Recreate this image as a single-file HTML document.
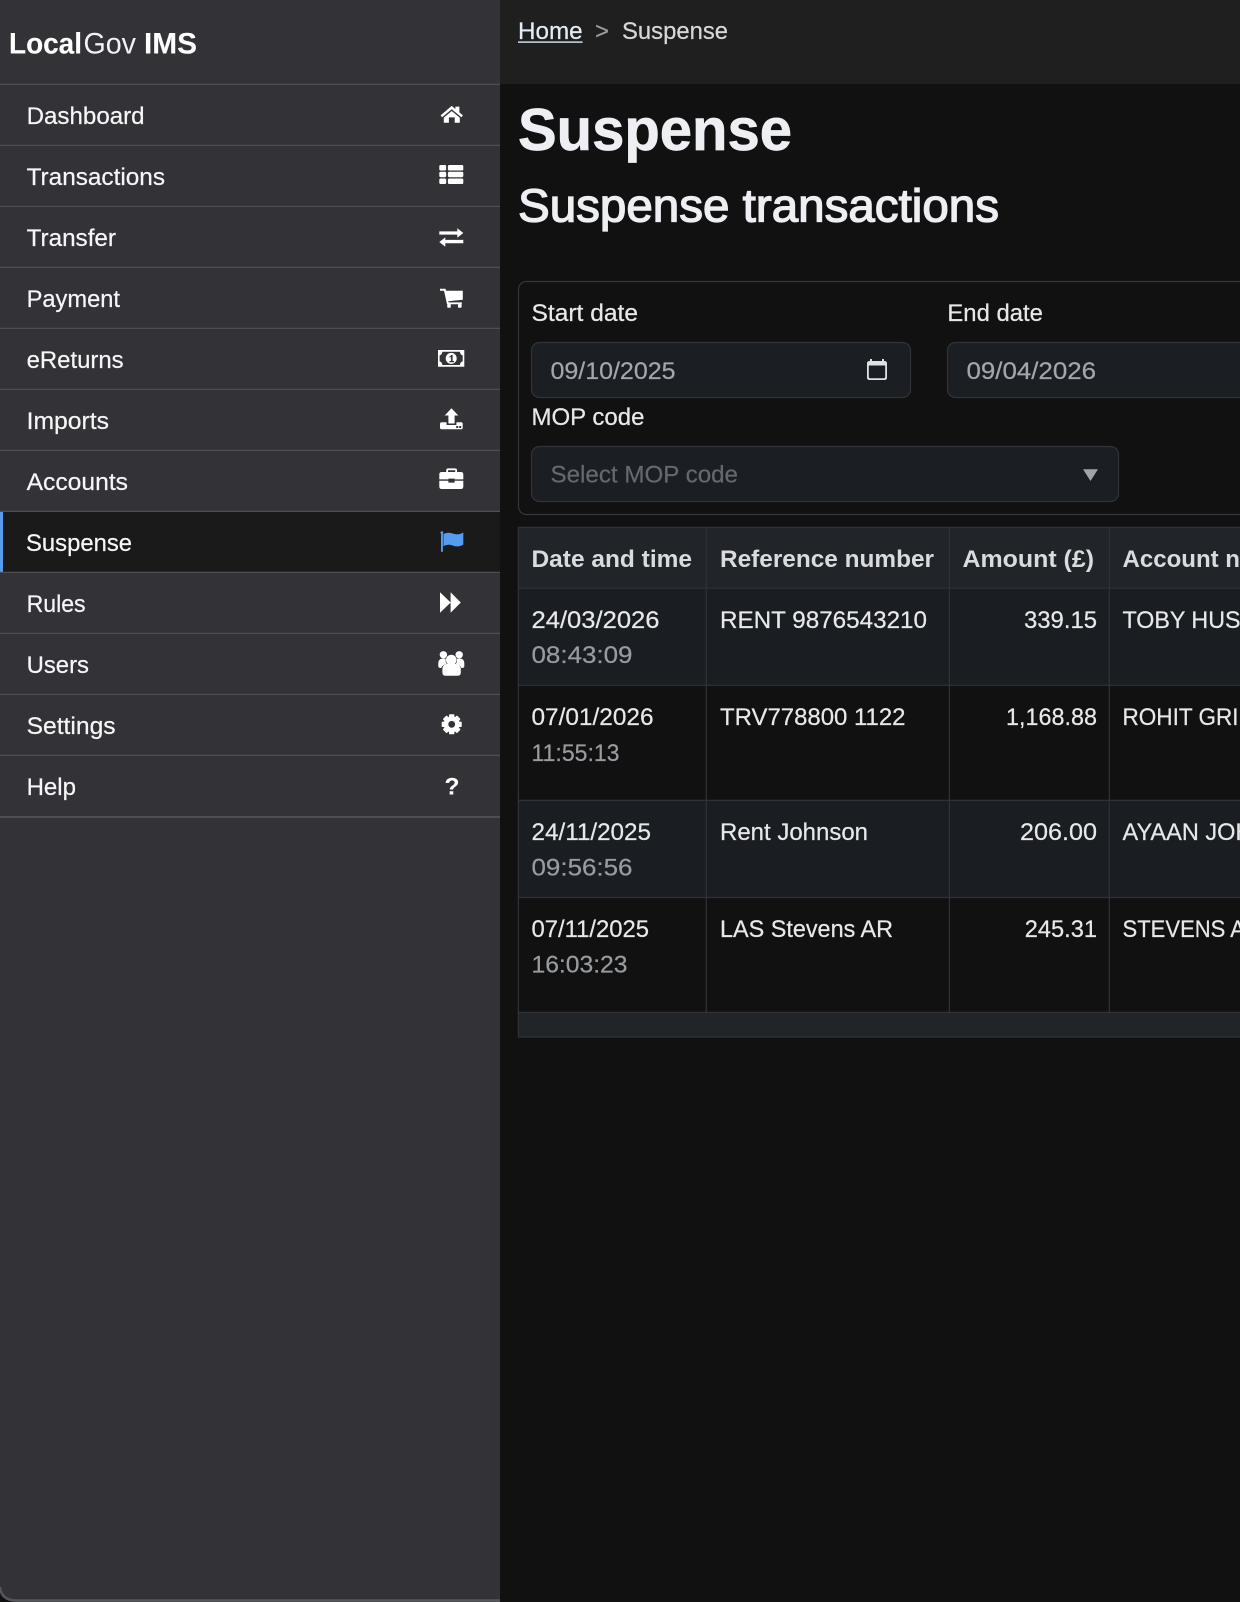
<!DOCTYPE html>
<html lang="en">
<head>
<meta charset="utf-8">
<title>Suspense - LocalGov IMS</title>
<style>
html,body{margin:0;padding:0;background:#111112;width:1240px;height:1602px;overflow:hidden}
svg{display:block}
text{font-family:"Liberation Sans",Arial,sans-serif;font-size:24.4px;color:#e7e8ea;fill:currentColor;stroke:currentColor;stroke-width:.22px}
.nav{color:#f6f6f8}
.b{font-weight:700;stroke-width:.1px}
.th{font-weight:700;color:#d9dbde;stroke-width:0}
.t{color:#989ba0}
.v{color:#a3a6aa}
.ln{stroke:#4c5053;stroke-width:1.2}
.tl{stroke:#2f3338;stroke-width:1.2}
.ic{fill:#fff}
</style>
</head>
<body>
<svg width="1240" height="1602" viewBox="0 0 1240 1602" xmlns="http://www.w3.org/2000/svg">
<rect width="1240" height="1602" fill="#111112"/>
<rect x="500" width="740" height="84" fill="#1f1f1f"/>

<!-- sidebar -->
<path d="M0 0H500V1602H16Q0 1602 0 1586Z" fill="#323237"/>
<path d="M0 1587Q1 1600 16 1600.5H500" fill="none" stroke="#55575a" stroke-width="2.4"/>
<rect y="512" width="500" height="60" fill="#1a1a1a"/>
<rect y="512" width="3" height="60" fill="#559bef"/>

<g class="ln">
<line x1="0" x2="500" y1="84.4" y2="84.4"/><line x1="0" x2="500" y1="145.4" y2="145.4"/>
<line x1="0" x2="500" y1="206.4" y2="206.4"/><line x1="0" x2="500" y1="267.4" y2="267.4"/>
<line x1="0" x2="500" y1="328.4" y2="328.4"/><line x1="0" x2="500" y1="389.4" y2="389.4"/>
<line x1="0" x2="500" y1="450.4" y2="450.4"/><line x1="0" x2="500" y1="511.4" y2="511.4"/>
<line x1="0" x2="500" y1="572.4" y2="572.4"/><line x1="0" x2="500" y1="633.4" y2="633.4"/>
<line x1="0" x2="500" y1="694.4" y2="694.4"/><line x1="0" x2="500" y1="755.4" y2="755.4"/>
<line x1="0" x2="500" y1="817" y2="817" stroke-width="2"/>
</g>

<text x="9" y="53.5" class="b" style="font-size:30px;color:#fff" textLength="73" lengthAdjust="spacingAndGlyphs">Local</text>
<text x="83.5" y="53.5" style="font-size:30px;color:#f2f2f4;stroke-width:0" textLength="52.5" lengthAdjust="spacingAndGlyphs">Gov</text>
<text x="144" y="53.5" class="b" style="font-size:30px;color:#fff" textLength="53" lengthAdjust="spacingAndGlyphs">IMS</text>

<text class="nav" x="26.6" y="124" textLength="118" lengthAdjust="spacingAndGlyphs">Dashboard</text>
<text class="nav" x="26.6" y="185" textLength="138.4" lengthAdjust="spacingAndGlyphs">Transactions</text>
<text class="nav" x="26.6" y="246" textLength="89.4" lengthAdjust="spacingAndGlyphs">Transfer</text>
<text class="nav" x="26.6" y="307" textLength="93.4" lengthAdjust="spacingAndGlyphs">Payment</text>
<text class="nav" x="26.6" y="368" textLength="97" lengthAdjust="spacingAndGlyphs">eReturns</text>
<text class="nav" x="26.6" y="429" textLength="82.4" lengthAdjust="spacingAndGlyphs">Imports</text>
<text class="nav" x="26.6" y="490" textLength="101.4" lengthAdjust="spacingAndGlyphs">Accounts</text>
<text class="nav" x="26" y="551" textLength="106" lengthAdjust="spacingAndGlyphs">Suspense</text>
<text class="nav" x="26.6" y="612" textLength="59" lengthAdjust="spacingAndGlyphs">Rules</text>
<text class="nav" x="26.6" y="673" textLength="62.4" lengthAdjust="spacingAndGlyphs">Users</text>
<text class="nav" x="26.6" y="734" textLength="89" lengthAdjust="spacingAndGlyphs">Settings</text>
<text class="nav" x="26.6" y="795" textLength="49.4" lengthAdjust="spacingAndGlyphs">Help</text>

<!-- icons -->
<g class="ic">
<!-- home -->
<path d="M440.6 115.4L451.7 105.9L455.4 109V106.6H459.4V112.4L462.9 115.4L461.4 117.2L451.7 109.2L442.1 117.2Z"/>
<path d="M443.8 117.6L451.7 111L459.8 117.6V122.8H454.7V117.4H448.9V122.8H443.8Z"/>
<!-- th-list -->
<rect x="439.3" y="165" width="6.9" height="5.5" rx="1.4"/><rect x="447.9" y="165" width="15.4" height="5.5" rx="1.4"/>
<rect x="439.3" y="171.8" width="6.9" height="5.4" rx="1.4"/><rect x="447.9" y="171.8" width="15.4" height="5.4" rx="1.4"/>
<rect x="439.3" y="178.5" width="6.9" height="5.5" rx="1.4"/><rect x="447.9" y="178.5" width="15.4" height="5.5" rx="1.4"/>
<!-- transfer -->
<path d="M439.3 231.4H457.3V228.3L463.3 233L457.3 237.7V234.6H439.3Z"/>
<path d="M463.3 239.9H445.3V237.4L439.3 242L445.3 246.7V243.3H463.3Z"/>
<!-- cart -->
<path d="M440 288.8H445.4L446.2 290.8H462.8V299.8L448.2 301.2L448.6 302.4H461.8V304.2H447L444 290.8H440Z"/>
<rect x="447.2" y="304" width="3.6" height="3.7" rx=".8"/><rect x="458" y="304" width="3.6" height="3.7" rx=".8"/>
<!-- money -->
<path fill-rule="evenodd" d="M438 350H464.3V366.7H438ZM442.4 351.8Q442 355 439.6 355.4V361.4Q442 361.8 442.4 365H459.9Q460.3 361.8 462.7 361.4V355.4Q460.3 355 459.9 351.8Z"/>
<circle cx="451.2" cy="358.4" r="5.5"/>
<path d="M449.3 356.8L451.6 354.9H452.6V361H454V362.3H449.4V361H450.9V356.8L449.7 357.8Z" fill="#323237"/>
<!-- upload -->
<path d="M451.5 408.3L458.3 415.5H454.6V423.5H448.4V415.5H444.7Z"/>
<path d="M441.6 422.2H446.6V425H456.4V422.2H461.2Q462.7 422.2 462.7 424V427.8Q462.7 429.3 461 429.3H441.7Q440 429.3 440 427.8V424Q440 422.2 441.6 422.2Z"/>
<rect x="456.2" y="426" width="2" height="2" fill="#323237"/><rect x="459.2" y="426" width="2" height="2" fill="#323237"/>
<!-- briefcase -->
<path fill-rule="evenodd" d="M448.2 468.4H455.2Q457 468.4 457 470.2V472H461Q463.3 472 463.3 474.4V479.4H454.6V478.6H448.4V479.4H439.3V474.4Q439.3 472 441.6 472H446.2V470.2Q446.2 468.4 448.2 468.4ZM448 470.2V472H455.2V470.2Z"/>
<path d="M439.3 480.8H448.4V482.6H454.6V480.8H463.3V486.6Q463.3 489 461 489H441.6Q439.3 489 439.3 486.6Z"/>
<!-- fast forward -->
<path d="M440 592.3L450.7 602.5L440 612.7Z"/>
<path d="M450.6 592.3L460.8 602.5L450.6 612.7Z"/>
<!-- users -->
<circle cx="451.3" cy="660" r="5.3"/>
<circle cx="443.4" cy="654.8" r="3.7"/><circle cx="459.2" cy="654.8" r="3.7"/>
<path d="M442.4 671V669C442.4 665.8 445 664 447.4 664H455.4C458 664 460.8 665.8 460.8 669V672.8Q460.8 675.7 457.8 675.7H445.4Q442.4 675.7 442.4 672.8Z"/>
<path d="M438.3 666.4V663C438.3 660 440.4 658.6 442 658.6H445.8Q445 662 447 664Q442.6 664.6 441.2 668Q438.3 668 438.3 666.4Z"/>
<path d="M464.3 666.4V663C464.3 660 462.2 658.6 460.6 658.6H456.8Q457.6 662 455.6 664Q460 664.6 461.4 668Q464.3 668 464.3 666.4Z"/>
<!-- gear -->
<g transform="translate(451.7 724.3)">
<circle r="8"/>
<rect x="-2.7" y="-10" width="5.4" height="20" rx=".8"/>
<rect x="-2.7" y="-10" width="5.4" height="20" rx=".8" transform="rotate(45)"/>
<rect x="-2.7" y="-10" width="5.4" height="20" rx=".8" transform="rotate(90)"/>
<rect x="-2.7" y="-10" width="5.4" height="20" rx=".8" transform="rotate(135)"/>
<circle r="3.4" fill="#323237"/>
</g>
</g>
<!-- flag -->
<g fill="#559bef">
<rect x="441" y="533" width="1.9" height="18.8"/><circle cx="441.9" cy="532.6" r="1.4"/>
<path d="M443.4 534.2C447 532 450 532.6 453 533.6C456.5 534.8 460 534.6 463.3 532.4V544.6C460 546.7 456.5 546.9 453 545.6C450 544.6 447 544.2 443.4 546.2Z"/>
</g>
<text x="452" y="794.4" text-anchor="middle" class="b" style="font-size:24.5px;color:#fff">?</text>

<!-- breadcrumb -->
<text x="518" y="39" style="color:#e3edf7" textLength="64.6" lengthAdjust="spacingAndGlyphs">Home</text>
<rect x="518" y="41.4" width="64.6" height="1.4" fill="#d6e8fa"/>
<text x="595" y="39" style="color:#9b9da0" textLength="14" lengthAdjust="spacingAndGlyphs">&gt;</text>
<text x="622" y="39" style="color:#d6d8da" textLength="106" lengthAdjust="spacingAndGlyphs">Suspense</text>

<!-- headings -->
<text x="518" y="150" class="b" style="font-size:59.5px;color:#eeeff3;stroke-width:.7px" textLength="274" lengthAdjust="spacingAndGlyphs">Suspense</text>
<text x="518" y="221.5" style="font-size:46.5px;color:#eeeff3;stroke-width:1.3px" textLength="481" lengthAdjust="spacingAndGlyphs">Suspense transactions</text>

<!-- filter card -->
<rect x="518.5" y="281.5" width="900" height="233" rx="8" fill="#111112" stroke="#33363b" stroke-width="1.2"/>
<text x="531.5" y="321" textLength="106.5" lengthAdjust="spacingAndGlyphs">Start date</text>
<text x="947.4" y="321" textLength="95.5" lengthAdjust="spacingAndGlyphs">End date</text>
<rect x="531.5" y="342.5" width="379" height="55" rx="8" fill="#1b1e22" stroke="#30343a" stroke-width="1.2"/>
<rect x="947.5" y="342.5" width="500" height="55" rx="8" fill="#1b1e22" stroke="#30343a" stroke-width="1.2"/>
<text class="v" x="550.5" y="379" textLength="125" lengthAdjust="spacingAndGlyphs">09/10/2025</text>
<text class="v" x="966.5" y="379" textLength="129.5" lengthAdjust="spacingAndGlyphs">09/04/2026</text>
<path fill-rule="evenodd" fill="#dfe1e4" d="M870 359H872V361H882V359H884V361H884.5Q887 361 887 363.5V377.5Q887 380 884.5 380H869.5Q867 380 867 377.5V363.5Q867 361 869.5 361H870ZM868.8 365.5V377Q868.8 378.2 870 378.2H884Q885.2 378.2 885.2 377V365.5Z"/>
<text x="531.5" y="425" textLength="113" lengthAdjust="spacingAndGlyphs">MOP code</text>
<rect x="531.5" y="446.5" width="587" height="55" rx="8" fill="#1b1e22" stroke="#30343a" stroke-width="1.2"/>
<text x="550.5" y="482.7" style="color:#65696e" textLength="187.5" lengthAdjust="spacingAndGlyphs">Select MOP code</text>
<path d="M1083 469.2H1098L1090.5 481Z" fill="#a0a4a9"/>

<!-- table -->
<rect x="518" y="527" width="760" height="61" fill="#212429"/>
<rect x="518" y="588" width="760" height="97" fill="#1a1d21"/>
<rect x="518" y="685" width="760" height="115.4" fill="#111112"/>
<rect x="518" y="800.4" width="760" height="97" fill="#1a1d21"/>
<rect x="518" y="897.4" width="760" height="115" fill="#111112"/>
<rect x="518" y="1012.4" width="760" height="25" fill="#212429"/>
<g class="tl">
<line x1="518" x2="1240" y1="527.4" y2="527.4"/>
<line x1="518" x2="1240" y1="588.2" y2="588.2"/>
<line x1="518" x2="1240" y1="685.3" y2="685.3"/>
<line x1="518" x2="1240" y1="800.4" y2="800.4"/>
<line x1="518" x2="1240" y1="897.5" y2="897.5"/>
<line x1="518" x2="1240" y1="1012.4" y2="1012.4"/>
<line x1="518" x2="1240" y1="1037" y2="1037"/>
<line x1="518.4" x2="518.4" y1="527" y2="1037.4"/>
<line x1="706.3" x2="706.3" y1="527" y2="1012.4"/>
<line x1="949.4" x2="949.4" y1="527" y2="1012.4"/>
<line x1="1109.3" x2="1109.3" y1="527" y2="1012.4"/>
</g>

<text class="th" x="531.5" y="567" textLength="160.5" lengthAdjust="spacingAndGlyphs">Date and time</text>
<text class="th" x="720" y="567" textLength="214" lengthAdjust="spacingAndGlyphs">Reference number</text>
<text class="th" x="962.5" y="567" textLength="131.5" lengthAdjust="spacingAndGlyphs">Amount (£)</text>
<text class="th" x="1122.5" y="567" textLength="117.5" lengthAdjust="spacingAndGlyphs">Account n</text>

<text x="531.5" y="628" textLength="128" lengthAdjust="spacingAndGlyphs">24/03/2026</text>
<text class="t" x="531.5" y="663" textLength="101" lengthAdjust="spacingAndGlyphs">08:43:09</text>
<text x="720" y="628" textLength="207" lengthAdjust="spacingAndGlyphs">RENT 9876543210</text>
<text x="1024" y="628" textLength="73" lengthAdjust="spacingAndGlyphs">339.15</text>
<text x="1122.5" y="628" textLength="118" lengthAdjust="spacingAndGlyphs">TOBY HUS</text>

<text x="531.5" y="725" textLength="122" lengthAdjust="spacingAndGlyphs">07/01/2026</text>
<text class="t" x="531.5" y="761" textLength="88" lengthAdjust="spacingAndGlyphs">11:55:13</text>
<text x="720" y="725" textLength="185.5" lengthAdjust="spacingAndGlyphs">TRV778800 1122</text>
<text x="1006" y="725" textLength="91" lengthAdjust="spacingAndGlyphs">1,168.88</text>
<text x="1122.5" y="725" textLength="116" lengthAdjust="spacingAndGlyphs">ROHIT GRI</text>

<text x="531.5" y="840" textLength="119.5" lengthAdjust="spacingAndGlyphs">24/11/2025</text>
<text class="t" x="531.5" y="875.7" textLength="101" lengthAdjust="spacingAndGlyphs">09:56:56</text>
<text x="720" y="840" textLength="148" lengthAdjust="spacingAndGlyphs">Rent Johnson</text>
<text x="1020" y="840" textLength="77" lengthAdjust="spacingAndGlyphs">206.00</text>
<text x="1122.5" y="840" textLength="130" lengthAdjust="spacingAndGlyphs">AYAAN JOH</text>

<text x="531.5" y="937" textLength="117.5" lengthAdjust="spacingAndGlyphs">07/11/2025</text>
<text class="t" x="531.5" y="972.5" textLength="96" lengthAdjust="spacingAndGlyphs">16:03:23</text>
<text x="720" y="937" textLength="173" lengthAdjust="spacingAndGlyphs">LAS Stevens AR</text>
<text x="1024.8" y="937" textLength="72.2" lengthAdjust="spacingAndGlyphs">245.31</text>
<text x="1122.5" y="937" textLength="122.5" lengthAdjust="spacingAndGlyphs">STEVENS A</text>
</svg>
</body>
</html>
